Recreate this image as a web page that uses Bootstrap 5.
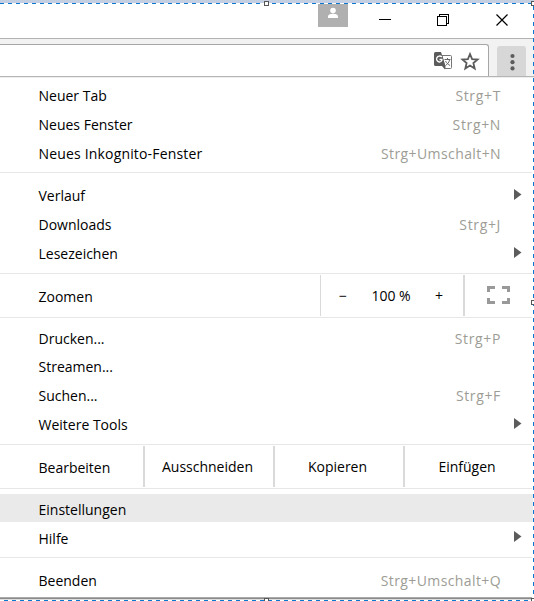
<!DOCTYPE html>
<html lang="de">
<head>
<meta charset="utf-8">
<title>Browser-Menü</title>
<link href="https://cdn.jsdelivr.net/npm/bootstrap@5.3.0/dist/css/bootstrap.min.css" rel="stylesheet">
<style>
body{font-family:"Open Sans","Noto Sans",sans-serif;font-size:14px;line-height:20px;color:#000;background:#fff}
svg{display:block;flex:none}
.frame{width:534px;height:601px}
.topband{height:3px;background:#c4cfe2}
.titlebar{height:35px}
.avatar{width:30px;height:23px;background:#b0b0b0;margin-left:318px;margin-top:1px}
.toolbar-strip{height:39px;background:#f2f2f2;border-top:1px solid #b2b2b2;border-bottom:1px solid #b5b5b5;padding-top:5px}
.address{width:489px;height:32px;border:1px solid #a6a6a6;border-width:1px 1px 0 0;border-radius:0 3px 0 0;background:#fff;padding-right:8px}
.menubtn{width:29px;margin:2px 7px 0 8px;background:#d7d7d7;border-radius:3px 3px 0 0}
.menu{height:520px;border-top:1px solid #eee}
.item{height:29px;padding-left:38.5px;padding-right:33px}
.item-short{height:28px}
.item span,.strip span{white-space:nowrap}
.item.sub{padding-right:12px}
.item.sub svg{margin-bottom:2px}
.wide{letter-spacing:.17px}
.key{color:#9d9d95;letter-spacing:.4px}
.key-short{letter-spacing:.65px}
.sep{height:1px;background:#e7e7e7;margin-right:2px}
.strip{height:43px;padding-left:38.5px}
.cell{height:41px;border-left:2px solid #dadada}
.edit-cell{width:130px;padding-right:3px}
.edit-last{width:131px;padding-right:5px}
.edit-label{padding-top:3px}
.zoom-label{padding-top:2px}
.zoomctl{width:143px;border-left-width:1px;padding:0 20px 0 18px}
.fullctl{width:71px}
.fullctl svg{margin:0 0 2px 22px}
.active-item{height:28px;background:#eaeaea;padding:3px 0 0 38.5px;margin-right:1px}
.pt-a{padding-top:3px}.pb-a{padding-bottom:4px}
.pt-b{padding-top:8px}.pb-b{padding-bottom:5px}
.pt-c{padding-top:6px}.pb-c{padding-bottom:5px}
.pt-d{padding-top:5px}.pb-d{padding-bottom:5px}
.gap-top{margin-top:1px}
.label-low{padding-top:2px}
.overlay{left:0;top:0;pointer-events:none}
</style>
<script src="https://cdn.jsdelivr.net/npm/bootstrap@5.3.0/dist/js/bootstrap.bundle.min.js"></script>
</head>
<body>
<div class="frame position-relative overflow-hidden">
  <div class="topband"></div>
  <header class="titlebar d-flex">
    <div class="avatar"><svg width="30" height="23"><circle cx="15" cy="6.5" r="2.8" fill="#fff"/><path d="M10 14v-1.500c0-2 3-2.700 5-2.700s5 .7 5 2.700V14z" fill="#fff"/></svg></div>
    <svg width="186" height="35" fill="none" stroke="#000" shape-rendering="crispEdges"><path d="M31 16.500h12M89.500 13.500h9v9h-9zM91.500 13v-1.500h9v9h-2"/><path d="M148.500 11.500l11 11m0-11l-11 11" shape-rendering="auto" stroke-width="1.200"/></svg>
  </header>
  <div class="toolbar-strip d-flex">
    <div class="address d-flex align-items-center justify-content-end gap-2">
      <svg width="18" height="18" viewBox="0 0 18 18"><path d="M8 3.500h8.500a1 1 0 011 1v11a1 1 0 01-1 1H11z" fill="#fff" stroke="#757575"/><path d="M1.500 0H7l4.500 14h-10A1.500 1.500 0 010 12.500v-11A1.500 1.500 0 011.500 0z" fill="#5b5b5b"/><path d="M11.500 14h-3.500l3 3.500z" fill="#5b5b5b"/><path d="M7.800 5A3 3 0 105.200 10 2.500 2.500 0 008 7.500H5.500" fill="none" stroke="#fff" stroke-width="1.300"/><path d="M10.500 7.500h6M13.500 6v1.500M15.500 8c-.5 2.500-2 4-4 5.500M11.500 9c1 2 2 3 4.500 4.500" fill="none" stroke="#666"/></svg>
      <svg width="20" height="20" viewBox="0 0 20 20"><path d="M10 3l2.100 5.100 5.500.4-4.200 3.600 1.300 5.400-4.700-2.900-4.700 2.900 1.300-5.400L2.400 8.500l5.500-.4z" fill="none" stroke="#5b5b5b" stroke-width="1.800"/></svg>
    </div>
    <div class="menubtn"><svg width="29" height="30" fill="#5c5c5c"><circle cx="15.500" cy="10" r="2.100"/><circle cx="15.500" cy="16.200" r="2.100"/><circle cx="15.500" cy="22.400" r="2.100"/></svg></div>
  </div>
  <main class="menu">
    <section class="pt-a pb-a">
      <div class="item d-flex align-items-center justify-content-between"><span>Neuer Tab</span><span class="key key-short">Strg+T</span></div>
      <div class="item d-flex align-items-center justify-content-between"><span>Neues Fenster</span><span class="key key-short">Strg+N</span></div>
      <div class="item d-flex align-items-center justify-content-between"><span class="wide">Neues Inkognito-Fenster</span><span class="key">Strg+Umschalt+N</span></div>
    </section>
    <div class="sep"></div>
    <section class="pt-b pb-b">
      <div class="item sub d-flex align-items-center justify-content-between"><span>Verlauf</span><svg width="8" height="12"><path d="M0 0l7.500 5.500L0 11z" fill="#5c5c5c"/></svg></div>
      <div class="item d-flex align-items-center justify-content-between"><span>Downloads</span><span class="key key-short">Strg+J</span></div>
      <div class="item sub d-flex align-items-center justify-content-between"><span>Lesezeichen</span><svg width="8" height="12"><path d="M0 0l7.500 5.500L0 11z" fill="#5c5c5c"/></svg></div>
    </section>
    <div class="sep"></div>
    <div class="strip d-flex align-items-center">
      <span class="me-auto zoom-label">Zoomen</span>
      <div class="cell zoomctl d-flex align-items-center justify-content-between"><span>−</span><span>100 %</span><span>+</span></div>
      <div class="cell fullctl d-flex align-items-center"><svg width="24" height="18" fill="none" stroke="#999" stroke-width="3"><path d="M0 1.500h8M1.500 0v6M15 1.500h8M21.500 0v6M0 16.500h8M1.500 18v-6M15 16.500h8M21.500 18v-6"/></svg></div>
    </div>
    <div class="sep"></div>
    <section class="pt-c pb-c">
      <div class="item d-flex align-items-center justify-content-between"><span>Drucken...</span><span class="key key-short">Strg+P</span></div>
      <div class="item item-short d-flex align-items-center"><span>Streamen...</span></div>
      <div class="item d-flex align-items-center justify-content-between"><span>Suchen...</span><span class="key key-short">Strg+F</span></div>
      <div class="item sub d-flex align-items-center justify-content-between"><span>Weitere Tools</span><svg width="8" height="12"><path d="M0 0l7.500 5.500L0 11z" fill="#5c5c5c"/></svg></div>
    </section>
    <div class="sep"></div>
    <div class="strip d-flex align-items-center">
      <span class="me-auto edit-label">Bearbeiten</span>
      <div class="cell edit-cell d-flex align-items-center justify-content-center"><span>Ausschneiden</span></div>
      <div class="cell edit-cell d-flex align-items-center justify-content-center"><span>Kopieren</span></div>
      <div class="cell edit-cell edit-last d-flex align-items-center justify-content-center"><span>Einfügen</span></div>
    </div>
    <div class="sep"></div>
    <section class="pt-d pb-d">
      <div class="active-item d-flex align-items-center"><span>Einstellungen</span></div>
      <div class="item sub gap-top d-flex align-items-center justify-content-between"><span class="label-low">Hilfe</span><svg width="8" height="12"><path d="M0 0l7.500 5.500L0 11z" fill="#5c5c5c"/></svg></div>
    </section>
    <div class="sep"></div>
    <section class="pt-b">
      <div class="item d-flex align-items-center justify-content-between"><span>Beenden</span><span class="key">Strg+Umschalt+Q</span></div>
    </section>
  </main>
  <svg class="overlay position-absolute" width="534" height="601" shape-rendering="crispEdges" fill="none">
    <path d="M0 597.500h532" stroke="#a9a9a9"/><path d="M0 598.500h532" stroke="#8b8b8b"/><path d="M0 599.500h532" stroke="#ddd"/>
    <path d="M0 3.500h534M533.500 6v594M4 600.500h530" stroke="#0a78d0" stroke-dasharray="4 4"/>
    <path d="M264.500 1.500h4v4h-4zM531.500 1.500h4v4h-4zM531.500 300.500h4v4h-4zM264.500 598.500h4v4h-4zM531.500 598.500h4v4h-4z" fill="#fff" stroke="#555"/>
  </svg>
</div>
</body>
</html>
